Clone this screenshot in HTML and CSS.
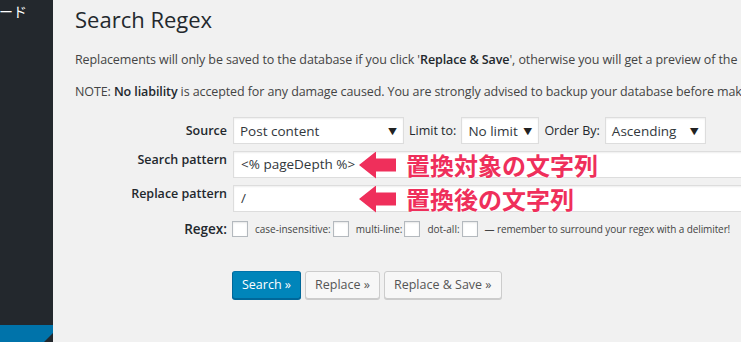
FILE: index.html
```html
<!DOCTYPE html>
<html lang="ja">
<head>
    <meta charset="UTF-8">
    <title>Search Regex</title>
    <link rel="stylesheet" href="styles.css">
</head>
<body>
    <div class="adminmenu">
        <div class="menu-top">ダッシュボード</div>
        <div class="menu-current"></div>
    </div>

    <div class="wrap">
        <h1>Search Regex</h1>

        <p>Replacements will only be saved to the database if you click '<strong>Replace &amp; Save</strong>', otherwise you will get a preview of the results.</p>
        <p>NOTE: <strong>No liability</strong> is accepted for any damage caused. You are strongly advised to backup your database before making any changes.</p>

        <form class="regex-form">
            <div class="form-grid">
                <div class="label label-source">Source</div>
                <div class="inline">
                    <div class="select select-source">Post content</div>
                    <label>Limit to:</label>
                    <div class="select select-limit">No limit</div>
                    <label>Order By:</label>
                    <div class="select select-order">Ascending</div>
                </div>

                <div class="label label-pattern">Search pattern</div>
                <div class="value">
                    <div class="field">&lt;% pageDepth %&gt;</div>
                    <div class="note">
                        <span class="arrow"></span>
                        <span class="note-text">置換対象の文字列</span>
                    </div>
                </div>

                <div class="label label-pattern">Replace pattern</div>
                <div class="value">
                    <div class="field">/</div>
                    <div class="note">
                        <span class="arrow"></span>
                        <span class="note-text">置換後の文字列</span>
                    </div>
                </div>

                <div class="label label-regex">Regex:</div>
                <div class="inline small">
                    <span class="check"></span>
                    <span class="opt">case-insensitive:</span>
                    <span class="check"></span>
                    <span class="opt">multi-line:</span>
                    <span class="check"></span>
                    <span class="opt">dot-all:</span>
                    <span class="check"></span>
                    <span class="opt hint">— remember to surround your regex with a delimiter!</span>
                </div>
            </div>

            <div class="buttons">
                <button type="button" class="button button-primary">Search »</button>
                <button type="button" class="button">Replace »</button>
                <button type="button" class="button">Replace &amp; Save »</button>
            </div>
        </form>
    </div>
</body>
</html>
```

FILE: styles.css
```css
html, body {
    margin: 0;
    height: 342px;
    overflow: hidden;
}
body {
    display: flex;
    background-color: #f1f1f1;
    color: #444;
    font-family: "Segoe UI", "Open Sans", "Noto Sans CJK JP", sans-serif;
    font-size: 12.5px;
}
.adminmenu {
    width: 53px;
    flex: none;
    background-color: #23282d;
    display: flex;
    flex-direction: column;
    justify-content: space-between;
    overflow: hidden;
}
.menu-top {
    color: #fff;
    font-size: 14px;
    line-height: 20px;
    margin-top: 1px;
    white-space: nowrap;
    direction: rtl;
    text-align: left;
    width: 27px;
    overflow: hidden;
    font-family: "Noto Sans CJK JP", sans-serif;
}
.menu-current {
    height: 17px;
    background-color: #0073aa;
    clip-path: polygon(0 0, 100% 0, 100% 8px, calc(100% - 9px) 100%, 0 100%);
}
.wrap {
    flex: 1;
    padding-left: 22px;
    white-space: nowrap;
    overflow: hidden;
}
h1 {
    font-size: 22px;
    font-weight: 400;
    color: #23282d;
    margin: 5px 0 0;
    line-height: 29px;
}
p {
    margin: 13px 0;
    line-height: 19px;
    letter-spacing: -0.1px;
}
.wrap > p:first-of-type {
    margin-top: 16px;
}
strong {
    font-weight: 600;
    color: #23282d;
}
.form-grid {
    display: grid;
    grid-template-columns: 152px 1fr;
    column-gap: 6px;
    row-gap: 7px;
    margin-top: 16px;
}
.label {
    text-align: right;
    font-weight: 600;
    color: #23282d;
}
.label-source {
    padding-top: 5px;
}
.label-pattern {
    padding-top: 0;
}
.label-regex {
    font-size: 13.5px;
    line-height: 18px;
    padding-top: 1px;
}
.inline {
    display: flex;
    align-items: center;
    gap: 5px;
}
.inline label {
    color: #23282d;
}
.select {
    height: 27px;
    box-sizing: border-box;
    background-color: #fff;
    border: 1px solid #ddd;
    box-shadow: inset 0 1px 2px rgba(0, 0, 0, 0.07);
    padding: 0 20px 0 6px;
    line-height: 27px;
    font-size: 13.5px;
    color: #32373c;
    position: relative;
}
.select::after {
    content: "▼";
    position: absolute;
    right: 6px;
    top: 0;
    font-size: 9px;
    color: #222;
}
.select-source {
    width: 171px;
}
.select-limit {
    width: 78px;
}
.select-order {
    width: 101px;
}
.value {
    position: relative;
}
.field {
    width: 560px;
    height: 27px;
    box-sizing: border-box;
    background-color: #fff;
    border: 1px solid #ddd;
    box-shadow: inset 0 1px 2px rgba(0, 0, 0, 0.07);
    padding: 0 7px;
    line-height: 25px;
    font-size: 13.5px;
    color: #32373c;
}
.note {
    position: absolute;
    left: 126px;
    top: 0;
    display: flex;
    align-items: center;
    gap: 10px;
}
.arrow {
    width: 37px;
    height: 27px;
    background-color: #ef2f5b;
    clip-path: polygon(0 50%, 17px 0, 17px 7px, 100% 7px, 100% 20px, 17px 20px, 17px 100%);
}
.note-text {
    font-family: "Noto Sans CJK JP", sans-serif;
    font-weight: 700;
    font-size: 24px;
    line-height: 28px;
    color: #ef2f5b;
    text-shadow: 0 0 2px #fff, 0 0 2px #fff;
}
.small {
    font-size: 10px;
    gap: 0;
    align-self: start;
    height: 20px;
    margin-left: -1px;
}
.check {
    width: 16px;
    height: 16px;
    box-sizing: border-box;
    background-color: #fff;
    border: 1px solid #b4b9be;
    box-shadow: inset 0 1px 2px rgba(0, 0, 0, 0.1);
    margin-right: 7px;
}
.opt {
    margin-right: 2px;
}
.hint {
    letter-spacing: -0.1px;
}
.buttons {
    display: flex;
    gap: 4px;
    margin: 32px 0 0 157px;
}
.button {
    height: 28px;
    padding: 0 9px 1px;
    font-family: inherit;
    font-size: 12.5px;
    line-height: 26px;
    color: #555;
    background-color: #f7f7f7;
    border: 1px solid #ccc;
    border-radius: 3px;
    box-shadow: 0 1px 0 #ccc;
    cursor: pointer;
}
.button-primary {
    color: #fff;
    background-color: #0085ba;
    border-color: #0073aa #006799 #006799;
    box-shadow: 0 1px 0 #006799;
}
```
